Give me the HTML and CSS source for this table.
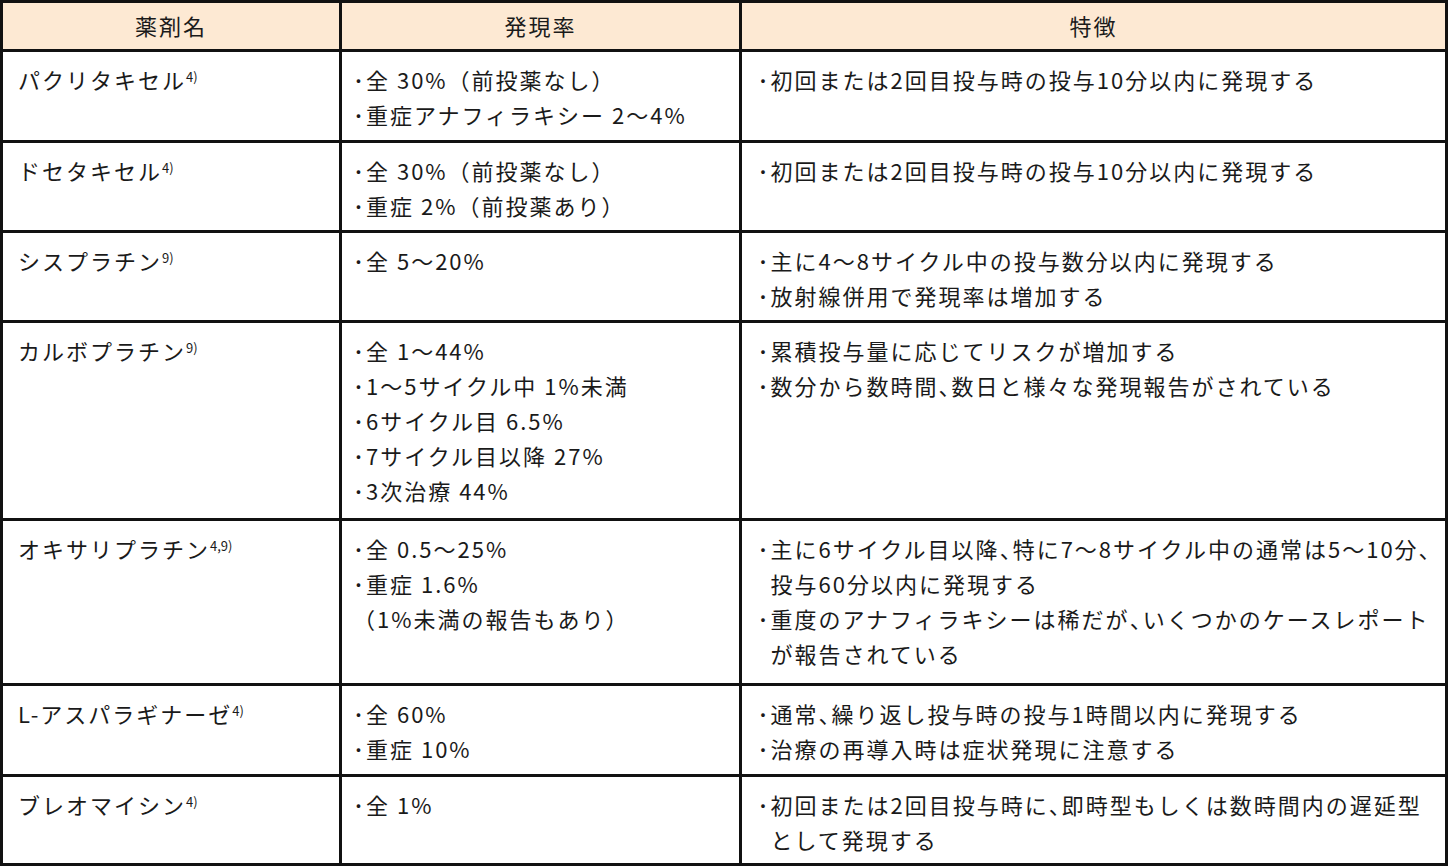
FILE: index.html
```html
<!DOCTYPE html>
<html lang="ja">
<head>
<meta charset="utf-8">
<title>薬剤別の過敏症発現率と特徴</title>
<link rel="stylesheet" href="styles.css">
</head>
<body>
<div class="drug-table">
  <div class="cell head">薬剤名</div>
  <div class="cell head">発現率</div>
  <div class="cell head">特徴</div>

  <div class="cell name">パクリタキセル<span class="ref">4)</span></div>
  <div class="cell rate"><ul><li>全 30%（前投薬なし）</li><li>重症アナフィラキシー 2〜4%</li></ul></div>
  <div class="cell feature"><ul><li>初回または2回目投与時の投与10分以内に発現する</li></ul></div>

  <div class="cell name">ドセタキセル<span class="ref">4)</span></div>
  <div class="cell rate"><ul><li>全 30%（前投薬なし）</li><li>重症 2%（前投薬あり）</li></ul></div>
  <div class="cell feature"><ul><li>初回または2回目投与時の投与10分以内に発現する</li></ul></div>

  <div class="cell name">シスプラチン<span class="ref">9)</span></div>
  <div class="cell rate"><ul><li>全 5〜20%</li></ul></div>
  <div class="cell feature"><ul><li>主に4〜8サイクル中の投与数分以内に発現する</li><li>放射線併用で発現率は増加する</li></ul></div>

  <div class="cell name">カルボプラチン<span class="ref">9)</span></div>
  <div class="cell rate"><ul><li>全 1〜44%</li><li>1〜5サイクル中 1%未満</li><li>6サイクル目 6.5%</li><li>7サイクル目以降 27%</li><li>3次治療 44%</li></ul></div>
  <div class="cell feature"><ul><li>累積投与量に応じてリスクが増加する</li><li>数分から数時間<span class="punct">、</span>数日と様々な発現報告がされている</li></ul></div>

  <div class="cell name">オキサリプラチン<span class="ref">4,9)</span></div>
  <div class="cell rate"><ul><li>全 0.5〜25%</li><li>重症 1.6%</li></ul><p class="note">（1%未満の報告もあり）</p></div>
  <div class="cell feature"><ul><li>主に6サイクル目以降<span class="punct">、</span>特に7〜8サイクル中の通常は5〜10分<span class="punct">、</span><br>投与60分以内に発現する</li><li>重度のアナフィラキシーは稀だが<span class="punct">、</span>いくつかのケースレポート<br>が報告されている</li></ul></div>

  <div class="cell name">L-アスパラギナーゼ<span class="ref">4)</span></div>
  <div class="cell rate"><ul><li>全 60%</li><li>重症 10%</li></ul></div>
  <div class="cell feature"><ul><li>通常<span class="punct">、</span>繰り返し投与時の投与1時間以内に発現する</li><li>治療の再導入時は症状発現に注意する</li></ul></div>

  <div class="cell name">ブレオマイシン<span class="ref">4)</span></div>
  <div class="cell rate"><ul><li>全 1%</li></ul></div>
  <div class="cell feature"><ul><li>初回または2回目投与時に<span class="punct">、</span>即時型もしくは数時間内の遅延型<br>として発現する</li></ul></div>
</div>
</body>
</html>
```

FILE: styles.css
```css
body {
  margin: 0;
  background: #ffffff;
  font-family: "Noto Sans CJK JP", "Noto Sans", sans-serif;
  color: #1a1a1a;
}

.drug-table {
  display: grid;
  grid-template-columns: 336px 397px 703px;
  grid-template-rows: 46px 88px 87px 87px 195px 162px 88px 86px;
  gap: 3px;
  padding: 3px;
  width: 1448px;
  height: 866px;
  box-sizing: border-box;
  background: #111111;
  font-size: 22px;
  line-height: 35.2px;
  letter-spacing: 2px;
}

.cell {
  background: #ffffff;
  padding: 9.5px 10px 0 15px;
  min-width: 0;
}

.head {
  background: #fde9d3;
  display: flex;
  align-items: center;
  justify-content: center;
  padding: 0;
}

.rate {
  padding-left: 11px;
}

.feature {
  padding-left: 15.5px;
}

ul {
  list-style: none;
  margin: 0;
  padding: 0;
}

li {
  padding-left: 13px;
  text-indent: -13px;
  white-space: nowrap;
}

li::before {
  content: "･";
  display: inline-block;
  width: 13px;
  text-indent: 0;
  letter-spacing: 0;
}

.note {
  margin: 0;
  white-space: nowrap;
}

.punct {
  font-feature-settings: "halt";
}

.ref {
  font-size: 13px;
  letter-spacing: 0;
  vertical-align: 7px;
  line-height: 1;
}
```
